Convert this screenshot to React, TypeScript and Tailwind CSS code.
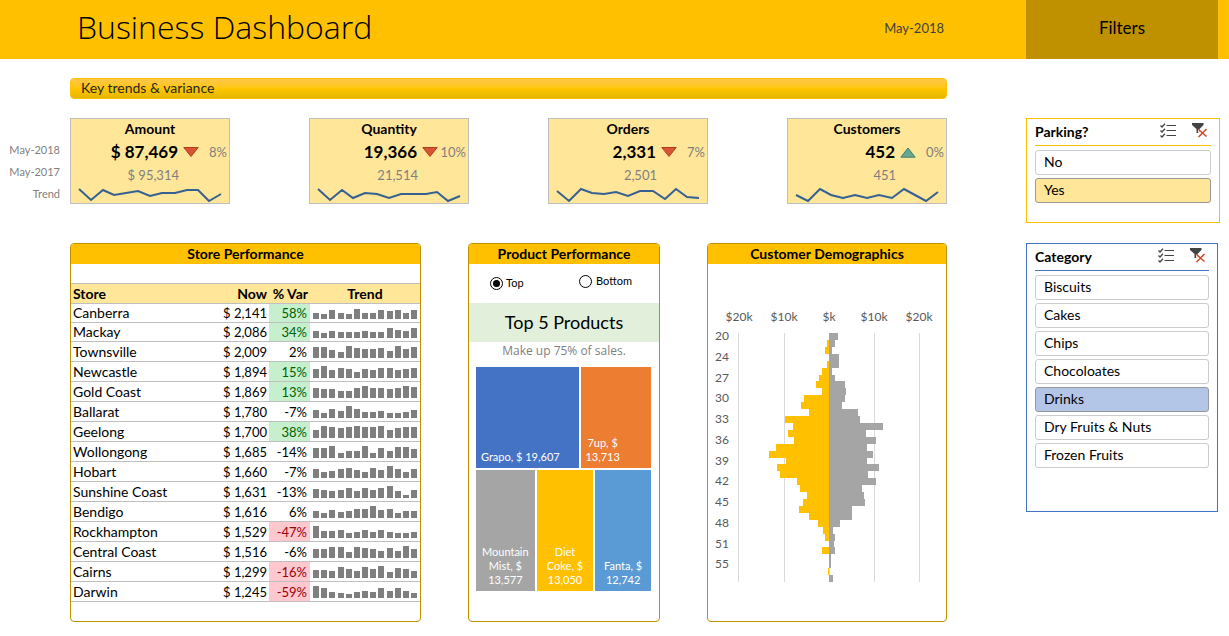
import React, { useState } from "react";
import clsx from "clsx";

const kpis = [
  { name: "Amount", now: "$ 87,469", prev: "$ 95,314", pct: "8%", up: false, trend: [2, 13, 3, 8, 6, 4, 9, 6, 6, 3, 3, 14, 7] },
  { name: "Quantity", now: "19,366", prev: "21,514", pct: "10%", up: false, trend: [2, 13, 3, 11, 6, 7, 11, 7, 7, 7, 5, 14, 9] },
  { name: "Orders", now: "2,331", prev: "2,501", pct: "7%", up: false, trend: [4, 14, 2, 6, 7, 5, 9, 4, 4, 12, 2, 10, 11] },
  { name: "Customers", now: "452", prev: "451", pct: "0%", up: true, trend: [8, 14, 2, 8, 11, 8, 11, 8, 11, 2, 8, 14, 5] },
];

const stores = [
  { name: "Canberra", now: "$ 2,141", diff: 58, trend: [6, 5, 9, 6, 5, 10, 6, 6, 9, 8, 9, 6, 9] },
  { name: "Mackay", now: "$ 2,086", diff: 34, trend: [7, 5, 7, 6, 6, 6, 7, 6, 6, 10, 8, 7, 10] },
  { name: "Townsville", now: "$ 2,009", diff: 2, trend: [11, 11, 8, 6, 12, 10, 9, 9, 10, 7, 12, 9, 11] },
  { name: "Newcastle", now: "$ 1,894", diff: 15, trend: [9, 12, 8, 10, 9, 6, 9, 8, 10, 10, 8, 9, 10] },
  { name: "Gold Coast", now: "$ 1,869", diff: 13, trend: [10, 9, 9, 7, 7, 10, 12, 10, 10, 9, 10, 12, 11] },
  { name: "Ballarat", now: "$ 1,780", diff: -7, trend: [8, 5, 9, 7, 12, 9, 6, 6, 7, 5, 5, 6, 8] },
  { name: "Geelong", now: "$ 1,700", diff: 38, trend: [8, 12, 11, 10, 11, 12, 11, 11, 12, 8, 10, 11, 11] },
  { name: "Wollongong", now: "$ 1,685", diff: -14, trend: [10, 10, 12, 5, 7, 7, 12, 5, 10, 7, 11, 11, 9] },
  { name: "Hobart", now: "$ 1,660", diff: -7, trend: [9, 6, 7, 9, 10, 8, 6, 10, 8, 12, 9, 6, 9] },
  { name: "Sunshine Coast", now: "$ 1,631", diff: -13, trend: [9, 8, 7, 8, 10, 7, 10, 8, 10, 12, 7, 3, 8] },
  { name: "Bendigo", now: "$ 1,616", diff: 6, trend: [7, 5, 8, 6, 7, 9, 9, 12, 8, 9, 5, 7, 7] },
  { name: "Rockhampton", now: "$ 1,529", diff: -47, trend: [12, 7, 7, 8, 5, 6, 8, 6, 8, 6, 5, 5, 6] },
  { name: "Central Coast", now: "$ 1,516", diff: -6, trend: [9, 9, 11, 11, 6, 11, 10, 9, 7, 10, 7, 12, 9] },
  { name: "Cairns", now: "$ 1,299", diff: -16, trend: [8, 8, 7, 11, 9, 7, 11, 9, 12, 6, 10, 9, 7] },
  { name: "Darwin", now: "$ 1,245", diff: -59, trend: [12, 10, 6, 5, 4, 6, 7, 6, 10, 7, 10, 7, 5] },
];

const ageLabels = [20, 24, 27, 30, 33, 36, 39, 42, 45, 48, 51, 55];
const leftBars = [
  0, 2, 4, 0, 2, 7, 10, 13, 7, 25, 28, 20, 44, 36, 41, 35, 53, 60, 43, 52, 49, 32,
  29, 22, 26, 30, 20, 11, 6, 4, 0, 7, 0, 0, 1, 0,
];
const rightBars = [
  9, 6, 3, 10, 10, 3, 6, 16, 17, 16, 13, 29, 31, 54, 37, 47, 38, 44, 38, 50, 39, 47,
  33, 35, 36, 23, 23, 11, 4, 6, 5, 6, 2, 2, 0, 4,
];

const categories = ["Biscuits", "Cakes", "Chips", "Chocoloates", "Drinks", "Dry Fruits & Nuts", "Frozen Fruits"];

// x positions of the points in the KPI lines and of the bars in the store table
const lineX = [8, 20, 32, 43, 55, 67, 79, 91, 104, 116, 127, 138, 150];
const barX = [3, 11, 19, 28, 36, 44, 52, 60, 68, 77, 85, 93, 101];

function KpiCard({ kpi }: { kpi: (typeof kpis)[number] }) {
  return (
    <div className="h-[86px] border border-[#bfbfbf] bg-[#ffe699]">
      <h3 className="text-center text-sm leading-5 font-bold">{kpi.name}</h3>
      <div className="flex h-[26px] items-center">
        <span className="w-[107px] text-right text-[17px] font-bold">{kpi.now}</span>
        <svg className="ml-[5px] h-3 w-4 shrink-0" viewBox="0 0 16 12">
          {kpi.up ? (
            <path d="M.8 11.200 8 2l7.200 9.200z" fill="#6aa58f" stroke="#3f8268" />
          ) : (
            <path d="M.8 1.500h14.400L8 10.500z" fill="#d65532" stroke="#b23c1c" />
          )}
        </svg>
        <span className="flex-1 pt-0.5 pr-[2px] text-right text-[13px] text-[#7f7f7f]">{kpi.pct}</span>
      </div>
      <div className="w-[108px] text-right text-[13px] leading-5 text-[#7f7f7f]">{kpi.prev}</div>
      <svg className="mt-0.5 w-full" viewBox="0 0 158 16">
        <polyline
          points={kpi.trend.map((y, i) => `${lineX[i]},${y}`).join(" ")}
          fill="none"
          stroke="#376092"
          strokeWidth="2"
        />
      </svg>
    </div>
  );
}

function Panel({ title, children }: { title: string; children: React.ReactNode }) {
  return (
    <section className="min-h-[379px] overflow-hidden rounded-[4px] border border-[#bf9000]">
      <h2 className="bg-[#ffc000] text-center text-sm leading-5 font-bold">{title}</h2>
      {children}
    </section>
  );
}

function StoreTable() {
  return (
    <table className="mt-[19px] w-full table-fixed border-separate border-spacing-0 border-t border-[#bfbfbf] text-sm leading-[18px]">
      <thead>
        <tr className="h-5 bg-[#ffe699]">
          <th className="border-b border-[#bfbfbf] p-0 pl-0.5 text-left">Store</th>
          <th className="w-[60px] border-b border-[#bfbfbf] p-0 pr-0.5 text-right">Now</th>
          <th className="w-[41px] border-b border-[#bfbfbf] p-0 pr-0.5 text-right whitespace-nowrap">% Var</th>
          <th className="w-[110px] border-b border-[#bfbfbf] p-0 text-center">Trend</th>
        </tr>
      </thead>
      <tbody>
        {stores.map((s, i) => (
          <tr key={s.name} className={i < 2 ? "h-[19px]" : "h-5"}>
            <td className="border-b border-[#bfbfbf] p-0 pl-0.5">{s.name}</td>
            <td className="border-b border-[#bfbfbf] p-0 pr-0.5 text-right text-[13px]">{s.now}</td>
            <td
              className={clsx(
                "border-b border-[#bfbfbf] p-0 pr-[3px] text-right text-[13px]",
                s.diff > 10 && "bg-[#c6efce] text-[#006100]",
                s.diff < -15 && "bg-[#ffc7ce] text-[#9c0006]"
              )}
            >
              {s.diff}%
            </td>
            <td className="border-b border-[#bfbfbf] p-0 pb-[3px] align-bottom">
              <svg className="block w-full" viewBox="0 0 110 14">
                {s.trend.map((h, n) => (
                  <rect key={n} x={barX[n]} y={14 - h} width="6" height={h} fill="#7f7f7f" />
                ))}
              </svg>
            </td>
          </tr>
        ))}
      </tbody>
    </table>
  );
}

function ProductPanel() {
  return (
    <Panel title="Product Performance">
      <div className="flex h-[39px] items-center justify-between pr-[27px] pl-[21px] text-[11px]">
        <label className="flex items-center gap-[3px]">
          <input
            type="radio"
            name="rank"
            defaultChecked
            className="size-[13px] appearance-none rounded-full border border-black p-[2px] checked:bg-black checked:bg-clip-content"
          />
          Top
        </label>
        <label className="flex items-center gap-1 pb-1">
          <input
            type="radio"
            name="rank"
            className="size-[13px] appearance-none rounded-full border border-black p-[2px] checked:bg-black checked:bg-clip-content"
          />
          Bottom
        </label>
      </div>
      <div className="bg-[#e2efda] text-center text-lg leading-[39px]">Top 5 Products</div>
      <p className="text-center font-['Open_Sans',sans-serif] text-xs leading-[18px] text-[#7f7f7f]">
        Make up 75% of sales.
      </p>
      <div className="mt-[7px] flex flex-col gap-[2px] pr-2 pl-[7px] text-center text-[11px] leading-[14px] text-white">
        <div className="grid h-[101px] grid-cols-[102fr_70fr] gap-[2px]">
          <div className="flex items-end bg-[#4472c4] pb-1 pl-[5px]">Grapo, $ 19,607</div>
          <div className="flex items-end bg-[#ed7d31] pb-1 pl-1">
            <span className="w-9">7up, $ 13,713</span>
          </div>
        </div>
        <div className="grid h-[121px] grid-cols-[59fr_57fr_56fr] gap-[2px]">
          <div className="flex items-end justify-center bg-[#a5a5a5] px-1 pb-1">Mountain Mist, $ 13,577</div>
          <div className="flex items-end justify-center bg-[#ffc000] px-2 pb-1">Diet Coke, $ 13,050</div>
          <div className="flex items-end justify-center bg-[#5b9bd5] px-1 pb-1">Fanta, $ 12,742</div>
        </div>
      </div>
    </Panel>
  );
}

function Demographics() {
  const step = 249 / 36;
  return (
    <svg className="mt-10 w-full text-[12px]" viewBox="0 0 238 280" fill="#595959">
      {["$20k", "$10k", "$k", "$10k", "$20k"].map((t, i) => (
        <g key={i}>
          <text x={31 + i * 45} y="17" textAnchor="middle">{t}</text>
          <rect x={30 + i * 45 + (i ? 1 : 0)} y="29" width="1" height="249" fill="#d9d9d9" />
        </g>
      ))}
      {ageLabels.map((a, i) => (
        <text key={a} x="7" y={36 + i * 3 * step}>{a}</text>
      ))}
      <g shapeRendering="crispEdges">
        {leftBars.map((w, i) => (
          <rect key={i} x={121 - w} y={29 + i * step} width={w} height={step} fill="#ffc000" />
        ))}
        {rightBars.map((w, i) => (
          <rect key={i} x="121" y={29 + i * step} width={w} height={step} fill="#a5a5a5" />
        ))}
      </g>
    </svg>
  );
}

function SlicerIcons() {
  return (
    <div className="flex gap-4">
      <button type="button" aria-label="Multi-select">
        <svg width="16" height="15" viewBox="0 0 16 15" fill="none" stroke="#444">
          <path d="M.5 2.500 2 4 5 .800M.5 7.500 2 9l3-3.200M.5 12.500 2 14l3-3.200" strokeWidth="1.300" />
          <path d="M6.500 2.500H16M6.500 7.500H16M6.500 12.500H16" />
        </svg>
      </button>
      <button type="button" aria-label="Clear filter">
        <svg width="16" height="16" viewBox="0 0 16 16" fill="none">
          <path d="M0 1h11.500v2L7.500 7v2.500L6 11V11H4.500V7L0 3z" fill="#444" />
          <path d="M6.500 7.500v3" stroke="#fff" />
          <path d="m6.500 7.500 8 7M14.500 7l-8 8" stroke="#d24726" strokeWidth="1.500" />
        </svg>
      </button>
    </div>
  );
}

function Slicer({ title, items, initial, blue }: { title: string; items: string[]; initial: string; blue?: boolean }) {
  const [selected, setSelected] = useState(initial);
  return (
    <section
      className={clsx(
        "border px-2 pt-[3px]",
        blue ? "mr-[2px] h-[269px] border-[#4472c4]" : "h-[105px] border-[#ffc000]"
      )}
    >
      <div
        className={clsx(
          "mb-1 flex h-6 items-start justify-between border-b pr-[3px]",
          blue ? "border-[#4472c4]" : "border-[#ffc000]"
        )}
      >
        <h2 className="text-sm leading-5 font-bold">{title}</h2>
        <SlicerIcons />
      </div>
      <div className="flex flex-col gap-[3px]">
        {items.map((item) => (
          <button
            key={item}
            type="button"
            aria-pressed={item === selected}
            onClick={() => setSelected(item)}
            className={clsx(
              "h-[25px] rounded-[3px] border pb-0.5 pl-2 text-left text-sm leading-[18px]",
              item !== selected && "border-[#ccc] bg-white",
              item === selected && "border-[#999]",
              item === selected && (blue ? "bg-[#b4c6e7]" : "bg-[#ffe699]")
            )}
          >
            {item}
          </button>
        ))}
      </div>
    </section>
  );
}

export default function App() {
  return (
    <div className="min-h-screen bg-white font-['Lato',sans-serif] text-black">
      <header className="flex h-[59px] items-stretch bg-[#ffc000] pr-[11px] leading-[56px]">
        <h1 className="flex-1 pl-[77px] font-['Open_Sans',sans-serif] text-[32px] leading-[54px] font-light">
          Business Dashboard
        </h1>
        <span className="text-[13px] text-[#404040]">May-2018</span>
        <div className="ml-[82px] w-48 bg-[#bf9000] text-center text-[17px]">Filters</div>
      </header>

      <div className="flex pr-[9px]">
        <main className="grid flex-1 grid-cols-[70px_minmax(0,1fr)] pt-[19px]">
          <h2 className="col-start-2 h-[21px] rounded-[4px] border border-[#ffc000] bg-linear-to-b from-[#ffc746] via-[#ffc600] to-[#e5b600] pl-[10px] text-sm leading-[18px] text-[#262626]">
            Key trends &amp; variance
          </h2>

          <div className="mt-10 pr-[10px] text-right text-[11px] leading-[22px] text-[#7f7f7f]">
            <div>May-2018</div>
            <div>May-2017</div>
            <div className="leading-[21px]">Trend</div>
          </div>
          <div className="mt-[19px] grid grid-cols-4 gap-[79px]">
            {kpis.map((k) => (
              <KpiCard key={k.name} kpi={k} />
            ))}
          </div>

          <div className="col-start-2 mt-[39px] grid grid-cols-[351fr_192fr_240fr] gap-[47px]">
            <Panel title="Store Performance">
              <StoreTable />
            </Panel>
            <ProductPanel />
            <Panel title="Customer Demographics">
              <Demographics />
            </Panel>
          </div>
        </main>

        <aside className="ml-[79px] flex w-[194px] flex-col gap-5 pt-[59px]">
          <Slicer title="Parking?" items={["No", "Yes"]} initial="Yes" />
          <Slicer title="Category" items={categories} initial="Drinks" blue />
        </aside>
      </div>
    </div>
  );
}
